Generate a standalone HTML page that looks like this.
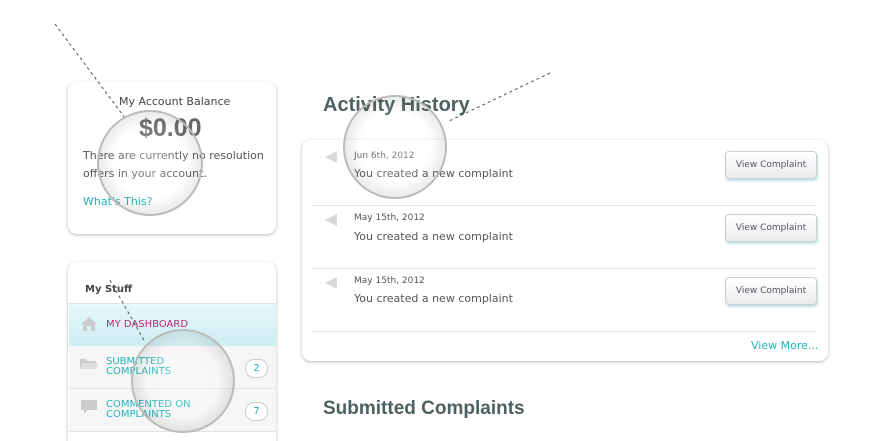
<!DOCTYPE html>
<html style="width:890px;height:441px;overflow:hidden"><head><style>
body{margin:0;width:890px;height:441px;overflow:hidden;background:#fff;font-family:"DejaVu Sans","Liberation Sans",sans-serif;position:relative}
.card{position:absolute;background:#fff;border-radius:9px;box-shadow:0 1px 3px rgba(0,0,0,.3);}
.a{position:absolute;white-space:nowrap}
.btn{position:absolute;left:725px;width:90px;height:26px;border:1px solid #c8d0d0;border-radius:4px;background:linear-gradient(#fff,#ececec);box-shadow:1px 2px 2px #bfe0e4;font-size:9px;color:#556;text-align:center;line-height:26px}
.sep{position:absolute;left:311px;width:506px;height:1px;background:#e6e6e6}
.date{font-size:9px;color:#555}
.txt{font-size:11px;color:#555}
.arr{position:absolute;left:325px;width:0;height:0;border-top:6px solid transparent;border-bottom:6px solid transparent;border-right:12px solid #d8d8d8}
.row{position:absolute;left:69px;width:207px;border-bottom:1px solid #e2e2e2}
.nav{position:absolute;left:106px;font-size:10px;line-height:10px;color:#22b3b8}
.badge{position:absolute;left:245px;width:21px;height:17px;border:1px solid #ccc;border-radius:9px;background:#fff;font-size:10px;color:#22b3b8;text-align:center;line-height:17px}
</style></head><body>
<div class="card" style="left:68px;top:82px;width:208px;height:152px"></div>
<div class="a" style="left:119px;top:95px;font-size:11px;color:#444">My Account Balance</div>
<div class="a" style="left:139px;top:114px;font-size:25px;font-weight:bold;color:#666;font-family:'Liberation Sans',sans-serif">$0.00</div>
<div class="a" style="left:83px;top:147px;font-size:11px;color:#555;line-height:18px;white-space:normal;width:190px">There are currently no resolution offers in your account.</div>
<div class="a" style="left:83px;top:195px;font-size:11px;color:#22b3b8">What's This?</div>

<div class="card" style="left:68px;top:262px;width:208px;height:200px"></div>
<div class="a" style="left:85px;top:284px;font-size:10px;font-weight:bold;color:#444">My Stuff</div>
<div class="row" style="top:303px;height:42px;background:linear-gradient(#e6f8fb,#cdeef2);border-top:1px solid #e0e0e0"></div>
<div class="row" style="top:346px;height:42px;background:#f6f6f6"></div>
<div class="row" style="top:389px;height:42px;background:#f6f6f6"></div>
<svg class="a" style="left:80px;top:316px" width="18" height="16"><path d="M1 8 L9 1 L17 8 L15 8 L15 15 L11 15 L11 10 L7 10 L7 15 L3 15 L3 8Z" fill="#ccc"/></svg>
<div class="nav" style="top:320px;color:#c0257a">MY DASHBOARD</div>
<svg class="a" style="left:80px;top:357px" width="18" height="13"><path d="M0 2 L6 2 L7 4 L16 4 L16 12 L0 12Z" fill="#ccc"/><path d="M2 6 L18 6 L16 12 L0 12Z" fill="#ddd"/></svg>
<div class="nav" style="top:357px">SUBMITTED<br>COMPLAINTS</div>
<div class="badge" style="top:359px">2</div>
<svg class="a" style="left:80px;top:399px" width="18" height="16"><path d="M1 1 H17 V11 H8 L4 15 V11 H1Z" fill="#ccc"/></svg>
<div class="nav" style="top:400px">COMMENTED ON<br>COMPLAINTS</div>
<div class="badge" style="top:402px">7</div>

<div class="a" style="left:323px;top:94px;font-size:20px;font-weight:bold;color:#4d6161;font-family:'Liberation Sans',sans-serif">Activity History</div>
<div class="card" style="left:302px;top:140px;width:526px;height:221px"></div>
<div class="arr" style="top:151px"></div>
<div class="a date" style="left:354px;top:151px">Jun 6th, 2012</div>
<div class="a txt" style="left:354px;top:167px">You created a new complaint</div>
<div class="btn" style="top:151px">View Complaint</div>
<div class="sep" style="top:205px"></div>
<div class="arr" style="top:214px"></div>
<div class="a date" style="left:354px;top:213px">May 15th, 2012</div>
<div class="a txt" style="left:354px;top:230px">You created a new complaint</div>
<div class="btn" style="top:214px">View Complaint</div>
<div class="sep" style="top:268px"></div>
<div class="arr" style="top:277px"></div>
<div class="a date" style="left:354px;top:276px">May 15th, 2012</div>
<div class="a txt" style="left:354px;top:292px">You created a new complaint</div>
<div class="btn" style="top:277px">View Complaint</div>
<div class="sep" style="top:331px"></div>
<div class="a" style="left:751px;top:339px;font-size:11px;color:#22b3b8">View More...</div>
<div class="a" style="left:323px;top:398px;font-size:19px;font-weight:bold;color:#4d6161;font-family:'Liberation Sans',sans-serif">Submitted Complaints</div>

<svg class="a" style="left:0;top:0" width="890" height="441">
<defs><radialGradient id="g"><stop offset="0" stop-color="#fff" stop-opacity="0.35"/><stop offset="0.7" stop-color="#fff" stop-opacity="0.1"/><stop offset="1" stop-color="#000" stop-opacity="0.08"/></radialGradient></defs>
<g stroke="#555" stroke-width="1" stroke-dasharray="3,3" fill="none">
<path d="M55 24 L125 118"/><path d="M550 73 L447 122"/><path d="M110 280 L145 342"/></g>
<g fill="url(#g)" stroke="#bbb" stroke-width="2">
<circle cx="150" cy="163" r="52"/><circle cx="395" cy="147" r="51"/><circle cx="183" cy="381" r="51"/></g>
</svg>
</body></html>
